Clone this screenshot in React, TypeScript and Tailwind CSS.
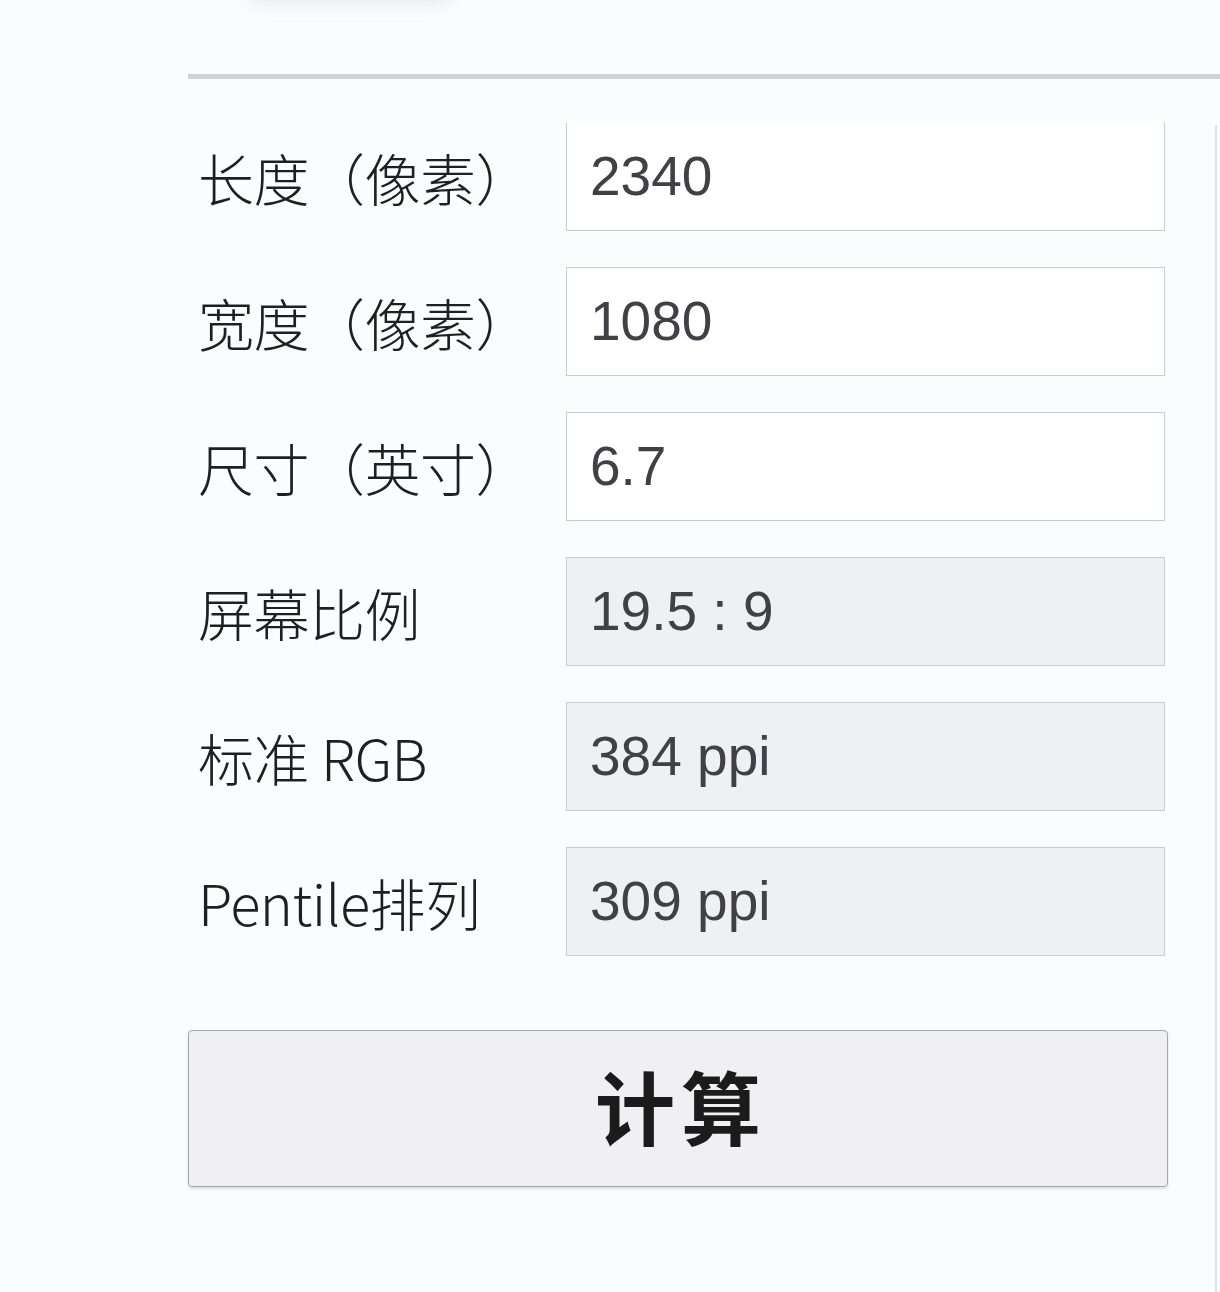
import React from "react";

const rows = [
  { label: "长度（像素）", value: "2340", readOnly: false, first: true },
  { label: "宽度（像素）", value: "1080", readOnly: false },
  { label: "尺寸（英寸）", value: "6.7", readOnly: false },
  { label: "屏幕比例", value: "19.5 : 9", readOnly: true },
  { label: "标准 RGB", value: "384 ppi", readOnly: true },
  { label: "Pentile排列", value: "309 ppi", readOnly: true },
];

export default function App() {
  return (
    <div className="relative w-[1220px] h-[1292px] bg-[#fbfcfe] overflow-hidden font-['Noto_Sans_CJK_SC',sans-serif]">
      {/* faint shadow of the element above */}
      <div className="absolute left-[250px] top-[-16px] w-[200px] h-[20px] rounded-full bg-[#e8e9ed] blur-[8px]" />
      {/* neighbour column edge */}
      <div className="absolute left-[1215px] top-[125px] bottom-0 w-[2px] bg-[#e1e2e7]" />

      <div className="pl-[188px] pt-[74px]">
        <div className="h-[5px] bg-[#cfd1d9]" />

        <div className="flex flex-col gap-[36px] pt-[43px]">
          {rows.map((r) => (
            <div key={r.label} className="flex items-center h-[109px]">
              <div className="w-[378px] pl-[10px] text-[56px] font-light leading-none text-[#1f1f1f] tracking-[-0.5px] whitespace-nowrap">
                {r.label}
              </div>
              <div
                className={`w-[599px] h-full flex items-center pl-[23px] border border-[#c9ccd2] ${
                  r.first ? "border-t-transparent" : ""
                } ${r.readOnly ? "bg-[#eff0f3]" : "bg-white"}`}
              >
                <span className="font-['Liberation_Sans',Arial,sans-serif] text-[55px] leading-none text-[#404046]">
                  {r.value}
                </span>
              </div>
            </div>
          ))}
        </div>

        <button className="mt-[74px] w-[980px] h-[157px] flex items-center justify-center rounded-[4px] border-[1.5px] border-[#a5a7ac] bg-[#f0f0f2] shadow-[0_2px_3px_rgba(0,0,0,0.12)]">
          <span className="font-['Noto_Sans_CJK_SC',sans-serif] font-bold text-[80px] leading-none text-[#1b1b1b] tracking-[6px] pl-[6px] -mt-[10px]">
            计算
          </span>
        </button>
      </div>
    </div>
  );
}
